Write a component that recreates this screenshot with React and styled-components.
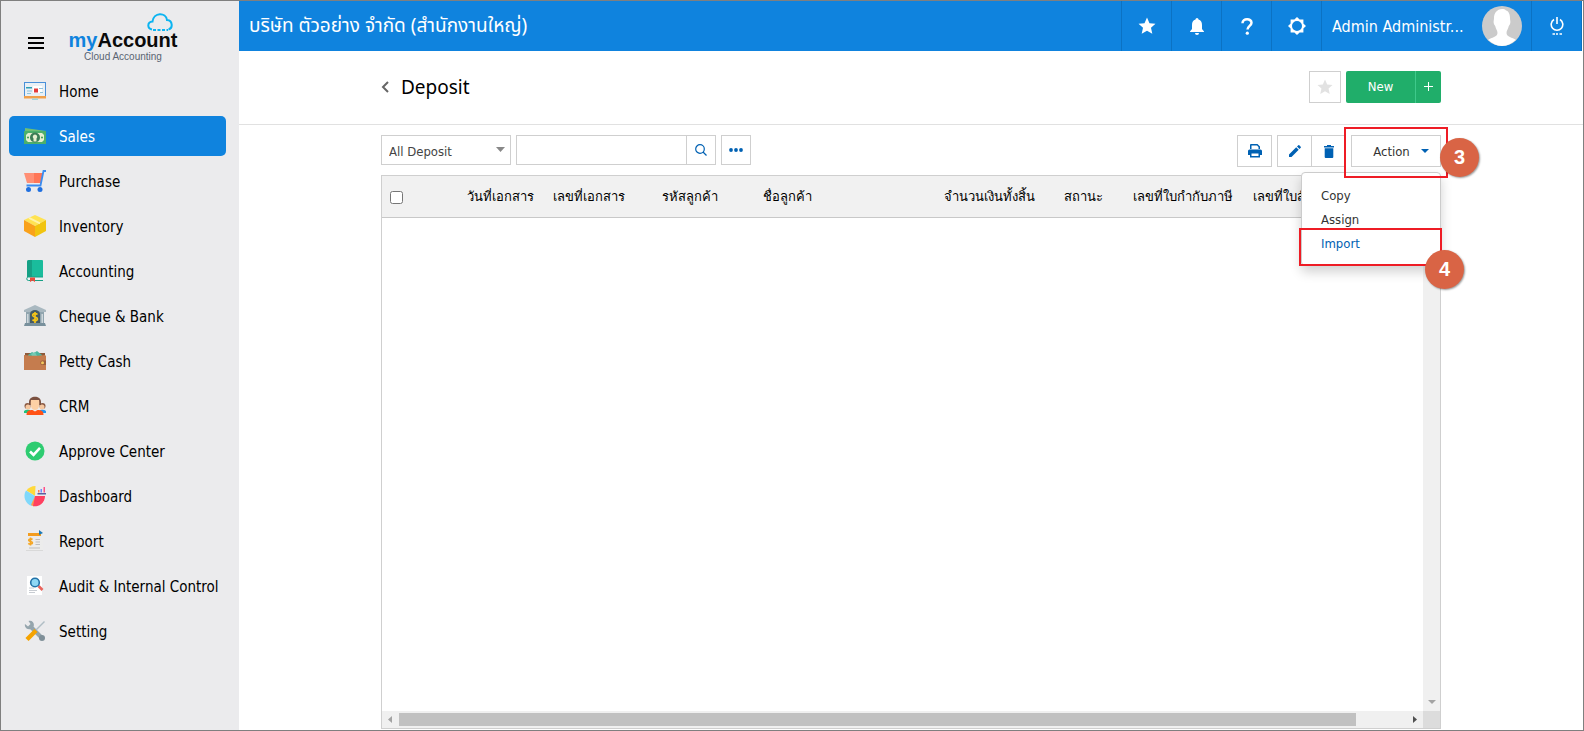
import React from 'react';
import styled, { createGlobalStyle } from 'styled-components';

const BLUE = '#0f83de';
const INK = '#0061b3';
const LINE = '#cfcfcf';
const UI = '"DejaVu Sans Condensed", "DejaVu Sans", "Noto Sans", sans-serif';

const GlobalStyle = createGlobalStyle`
  *, *::before, *::after { box-sizing: border-box; }
  body { margin: 0; font-family: ${UI}; color: #000; background: #fff; }
  button, input, select { font: inherit; color: inherit; }
  button { cursor: pointer; }
`;

const Page = styled.div`
  display: flex;
  height: 100vh;
  border: 1px solid #7f7f7f;
`;

/* ---------- sidebar ---------- */
const Sidebar = styled.aside`
  flex: 0 0 238px;
  background: #ebebed;
  padding: 0 13px 0 8px;
`;
const Brand = styled.header`
  display: flex;
  height: 70px;
  padding: 12px 0 0 18px;
`;
const Burger = styled.button`
  width: 18px;
  height: 14px;
  margin: 23px 22px 0 0;
  padding: 0;
  border: 0;
  background: none;
  svg { display: block; }
`;
const Logo = styled.div`
  position: relative;
  width: 112px;
  padding-top: 16px;
  text-align: center;
  font-family: "Liberation Sans", Arial, sans-serif;
`;
const LogoCloud = styled.svg`
  position: absolute;
  top: 0;
  right: 6px;
`;
const LogoName = styled.div`
  font-size: 20px;
  line-height: 22px;
  font-weight: 700;
  color: #0a0a0a;
  span { color: ${BLUE}; }
`;
const LogoTag = styled.div`
  font-size: 10px;
  line-height: 12px;
  color: #5a6472;
`;
const NavList = styled.ul`
  display: flex;
  flex-direction: column;
  gap: 5px;
  margin: 0;
  padding: 0;
  list-style: none;
`;
const NavLink = styled.a`
  display: flex;
  align-items: center;
  gap: 13px;
  height: 40px;
  padding-left: 15px;
  border-radius: 5px;
  font-size: 15px;
  white-space: nowrap;
  text-decoration: none;
  color: ${p => (p.$active ? '#fff' : '#000')};
  background: ${p => (p.$active ? BLUE : 'transparent')};
  svg { flex: none; }
`;
const NavLabel = styled.span`
  padding-top: 2px;
`;

/* ---------- top bar ---------- */
const Main = styled.main`
  flex: 1;
  min-width: 0;
  display: flex;
  flex-direction: column;
`;
const TopBar = styled.header`
  display: flex;
  height: 50px;
  flex: none;
  margin-right: 1px;
  border-right: 1px solid #0b72c3;
  background: ${BLUE};
  color: #fff;
`;
const Company = styled.div`
  flex: 1;
  padding: 2px 0 0 10px;
  font-family: "Noto Sans Thai", "Noto Sans", sans-serif;
  font-size: 19px;
  line-height: 48px;
  white-space: nowrap;
`;
const TopButton = styled.button`
  display: flex;
  align-items: center;
  justify-content: center;
  width: 50px;
  padding: 0;
  border: 0;
  border-left: 1px solid #0b72c3;
  background: none;
`;
const Account = styled.button`
  display: flex;
  align-items: center;
  justify-content: space-between;
  width: 210px;
  padding: 0 9px 0 10px;
  border: 0;
  border-left: 1px solid #0b72c3;
  background: none;
  font-size: 16px;
  white-space: nowrap;
`;

/* ---------- content ---------- */
const TitleStrip = styled.div`
  flex: none;
  border-bottom: 1px solid #e1e1e1;
`;
const Column = styled.div`
  width: 100%;
  max-width: 1060px;
  margin: 0 auto;
`;
const TitleRow = styled(Column)`
  display: flex;
  align-items: center;
  justify-content: space-between;
  height: 73px;
  padding-bottom: 2px;
`;
const Title = styled.h1`
  display: flex;
  align-items: center;
  gap: 12px;
  margin: 0;
  font-family: "Noto Sans", sans-serif;
  font-size: 19px;
  font-weight: 400;
`;
const BackLink = styled.a`
  display: flex;
`;
const Group = styled.div`
  display: flex;
  gap: ${p => p.$gap || 0}px;
`;
const BoxButton = styled.button`
  display: flex;
  align-items: center;
  justify-content: center;
  width: ${p => p.$w}px;
  height: ${p => p.$h}px;
  padding: 0;
  border: 1px solid ${LINE};
  border-left-width: ${p => (p.$joined ? 0 : 1)}px;
  background: #fff;
  color: ${INK};
`;
const NewButton = styled.button`
  display: flex;
  align-items: center;
  justify-content: center;
  width: ${p => p.$w}px;
  height: 32px;
  padding: 0;
  border: 0;
  border-left: ${p => (p.$split ? '1px solid #3fc98b' : '0')};
  border-radius: ${p => (p.$split ? '0 2px 2px 0' : '2px 0 0 2px')};
  background: #20ae6a;
  color: #fff;
  font-size: 13px;
`;
const Work = styled(Column)`
  flex: 1;
  min-height: 0;
  display: flex;
  flex-direction: column;
  padding: 10px 0 1px;
`;
const ToolRow = styled.div`
  display: flex;
  justify-content: space-between;
  height: 40px;
`;
const SelectWrap = styled.div`
  position: relative;
  width: 130px;
  height: 30px;
  svg { position: absolute; right: 6px; top: 12px; pointer-events: none; }
`;
const Select = styled.select`
  width: 100%;
  height: 100%;
  padding: 2px 7px 0;
  appearance: none;
  border: 1px solid ${LINE};
  border-radius: 0;
  background: #fff;
  color: #444;
  font-size: 13px;
`;
const SearchInput = styled.input`
  width: 171px;
  height: 30px;
  padding: 0 8px;
  border: 1px solid ${LINE};
  border-radius: 0;
  font-size: 13px;
`;
const ActionWrap = styled.div`
  position: relative;
  z-index: 1;
`;
const ActionButton = styled(BoxButton)`
  gap: 11px;
  padding-left: 10px;
  color: #333;
  font-size: 13px;
`;
const Menu = styled.ul`
  position: absolute;
  top: 37px;
  right: 0;
  width: 140px;
  margin: 0;
  padding: 10px 0;
  list-style: none;
  border: 1px solid #ccc;
  border-radius: 4px;
  background: #fff;
  box-shadow: 0 6px 12px rgba(0, 0, 0, 0.18);
`;
const MenuItem = styled.button`
  display: block;
  width: 100%;
  height: 24px;
  padding: 0 0 0 19px;
  border: 0;
  background: none;
  text-align: left;
  font-size: 13px;
  color: ${p => (p.$on ? INK : '#333')};
`;
const Outline = styled.div`
  position: absolute;
  top: ${p => p.$top}px;
  right: ${p => p.$right}px;
  width: ${p => p.$w}px;
  height: ${p => p.$h}px;
  border: 2px solid #ee1c25;
  pointer-events: none;
`;
const Step = styled.div`
  position: absolute;
  top: ${p => p.$top}px;
  right: ${p => p.$right}px;
  width: 39px;
  height: 39px;
  border-radius: 50%;
  background: #d96445;
  color: #fff;
  box-shadow: 1px 1px 2px rgba(0, 0, 0, 0.4);
  font: 700 20px/38px "Liberation Sans", Arial, sans-serif;
  text-align: center;
`;

/* ---------- grid ---------- */
const GridFrame = styled.section`
  flex: 1;
  min-height: 0;
  display: flex;
  flex-direction: column;
  border: 1px solid ${LINE};
`;
const HeadClip = styled.div`
  flex: none;
  overflow: hidden;
  background: #f1f1f1;
  border-bottom: 1px solid #c8c8c8;
`;
const Table = styled.table`
  width: 100%;
  table-layout: fixed;
  border-collapse: collapse;
  th {
    height: 41px;
    padding: 0;
    overflow: hidden;
    text-align: left;
    font-weight: 400;
    font-size: 13px;
    line-height: 20px;
    white-space: nowrap;
  }
`;
const Col = styled.col`
  width: ${p => (p.$w ? p.$w + 'px' : 'auto')};
`;
const Check = styled.input`
  display: block;
  width: 13px;
  height: 13px;
  margin: 2px 0 0 8px;
`;
const GridBody = styled.div`
  flex: 1;
  min-height: 0;
  display: grid;
  grid-template-columns: 1fr 17px;
  grid-template-rows: 1fr 17px;
`;
const VTrack = styled.div`
  display: flex;
  align-items: flex-end;
  justify-content: center;
  padding-bottom: 7px;
  background: #f0f0f0;
`;
const HTrack = styled.div`
  display: flex;
  align-items: center;
  justify-content: space-between;
  padding: 0 6px;
  background: #f0f0f0;
`;
const Thumb = styled.div`
  flex: 1;
  height: 13px;
  margin: 0 57px 0 7px;
  background: #c1c1c1;
`;
const Corner = styled.div`
  background: #dcdcdc;
`;

/* ---------- drawings ---------- */
const Star = ({ size, fill }) => (
  <svg width={size} height={size} viewBox="0 0 24 24" fill={fill} aria-hidden="true">
    <path d="M12 .8l3.300 7.400 8 .8-6 5.400 1.800 8L12 18.300 4.900 22.400l1.800-8L.7 9l8-.8z" />
  </svg>
);
const Avatar = () => (
  <svg width="40" height="40" viewBox="0 0 40 40" aria-hidden="true">
    <circle cx="20" cy="20" r="20" fill="#cbcbcb" />
    <path fill="#fff" d="M20 3c-5 .3-8 4-8 9 0 2-.6 3-.3 5 .4 2 1.200 2 1.500 3 .6 3 2.300 4.500 2.300 7 0 4-6 4.500-9.300 6.800A20 20 0 0 0 20 40a20 20 0 0 0 13.800-6.200C30.500 31.500 24.500 31 24.500 27c0-2.500 1.700-4 2.300-7 .3-1 1.100-1 1.500-3 .3-2-.3-3-.3-5 0-4-1.500-7-4-7.500C23 3 22 3 20 3z" />
  </svg>
);
const Triangle = ({ w, h, fill, dir = 'down' }) => {
  const d = dir === 'down' ? `M0 0h${w}L${w / 2} ${h}z` : dir === 'left' ? `M${w} 0v${h}L0 ${h / 2}z` : `M0 0v${h}L${w} ${h / 2}z`;
  return <svg width={w} height={h} fill={fill} aria-hidden="true"><path d={d} /></svg>;
};

const art = {
  Home: <>
    <rect x="0" y="2" width="22" height="15" fill="#4a90d9" /><rect x="1" y="3" width="20" height="13.500" fill="#e9f0f5" />
    <path fill="#f0a04b" d="M0 16h22v2.500H0z" /><path fill="#9fd4de" d="M8 18.500h6V20H8z" />
    <path fill="#2e9fb5" d="M2 7h6v1.500H2z" /><path fill="#fff" d="M9 6h9v7H9z" /><path fill="#e23b3b" d="M10 8.500h4v4h-4z" />
    <path stroke="#8fc3dd" d="M3 11h5M3 13.500h4M15 8.500h4M16 12.500h3" /></>,
  Sales: <>
    <path fill="#6fbf73" d="M1 3l21 3v5L1 8z" /><path fill="#4caf6a" d="M0 6h22v13H0z" />
    <path fill="#e4efcf" d="M4 8h14l2 2v5l-2 2H4l-2-2v-5z" /><circle cx="11" cy="12.500" r="5" fill="#3b7d55" />
    <path fill="#e4efcf" d="M11 9.500a2.300 2.300 0 0 1 1.500 4v3h-3v-3a2.300 2.300 0 0 1 1.500-4z" /><circle cx="4" cy="12.500" r="1" fill="#3d9b4f" /><circle cx="18" cy="12.500" r="1" fill="#3d9b4f" /></>,
  Purchase: <>
    <path fill="#ff8f75" d="M0 3h19l-2 10H3z" /><path fill="#ff7657" d="M10 3h9l-2 10h-7z" />
    <path fill="none" stroke="#3a8cf0" strokeWidth="1.800" d="M22 1h-2.500l-3 14.500H2.500" />
    <circle cx="4.500" cy="19.500" r="2.500" fill="#1f6fe0" /><circle cx="16" cy="19.500" r="2.500" fill="#1f6fe0" /></>,
  Inventory: <>
    <path fill="#ffe352" d="M11 0l11 5-11 6L0 5z" /><path fill="#f9a11b" d="M0 5l11 6v11L0 16z" /><path fill="#f1c40f" d="M22 5l-11 6v11l11-6z" />
    <path stroke="#fff3a8" strokeWidth="2" d="M5 2.800l11 5.500" /></>,
  Accounting: <>
    <path fill="#1abc9c" d="M5 0h13a1 1 0 0 1 1 1v16H3V2a2 2 0 0 1 2-2z" /><path fill="#16a085" d="M5 0h3v17H3V2a2 2 0 0 1 2-2z" />
    <path fill="#ecf0f1" d="M4 17h15v3H4z" /><path fill="none" stroke="#16a085" d="M19 17H4.500a1.500 1.500 0 0 0 0 3.500H19" />
    <path fill="#e74c3c" d="M6 17.500h5V22l-2.500-1.500L6 22z" /></>,
  'Cheque & Bank': <>
    <path fill="#a9b8c0" d="M11 0l11 5v2H0V5z" /><path fill="#90a4ae" d="M2 7h18v2H2zM2 9h4v9H2zM16 9h4v9h-4z" /><path fill="#cfd8dc" d="M3 9h1.500v9H3zM17.500 9H19v9h-1.500z" />
    <path fill="#455a64" d="M6 18V9a5 4 0 0 1 10 0v9z" /><path fill="#78909c" d="M1 18h20l1 3H0z" />
    <path fill="none" stroke="#f5c518" strokeWidth="1.700" d="M13.500 9.500C12 8 8.500 8.300 8.700 10.500c.2 2 4.600 1.200 4.700 3.400.1 2.200-3.500 2.300-4.900.8M11 7v11" /></>,
  'Petty Cash': <>
    <path fill="#8d5a3b" d="M1 3h20v5H1z" /><path fill="#4db6a0" d="M4 5l4-3 2 1 3-2 5 4v2H4z" /><path fill="#74cbb5" d="M7 4l4-2 2 4H8z" />
    <path fill="#c57c4e" d="M0 5c6 1 16 1 21 0l1 1v14H0z" /><path fill="#9b5f3b" d="M18.500 10.500H22V15h-3.500a2.200 2.200 0 0 1 0-4.500z" /><circle cx="18.500" cy="12.800" r="1.500" fill="#f4c95d" /></>,
  CRM: <>
    <circle cx="3.500" cy="11" r="3" fill="#8a5b45" /><circle cx="18.500" cy="11" r="3" fill="#8a5b45" /><circle cx="4" cy="12" r="2.500" fill="#f7c8a0" /><circle cx="18" cy="12" r="2.500" fill="#f7c8a0" />
    <path fill="#20c27d" d="M0 16q2-2 6-1v3H0z" /><path fill="#2196f3" d="M22 16q-2-2-6-1v3h6z" />
    <path fill="#7b5140" d="M5 7C5 0 17 0 17 7v3H5z" /><path fill="#fcd0a5" d="M7 5h8c1 7-1 10-4 10S6 12 7 5z" />
    <path fill="#ff5216" d="M2.500 20c0-4 2-5 6-5l2.500 1.500 2.500-1.500c4 0 6 1 6 5z" /></>,
  'Approve Center': <>
    <circle cx="11" cy="11" r="9.500" fill="#2ecc71" /><path fill="none" stroke="#fff" strokeWidth="2.600" d="M6 11.500l3.500 3.300 6.500-7" /></>,
  Dashboard: <>
    <path fill="#ffd93b" d="M11 11L2.500 5.500A11 11 0 0 1 11.500 1z" /><path fill="#7fd8fb" d="M11 11L8 21A10.500 10.500 0 0 1 2 5.500z" /><path fill="#ff9a4a" d="M11 11l-1 10.500L7 20z" />
    <path fill="#ff4060" d="M11 11h10a10 10 0 0 1-12 10z" /><path fill="#5a60a0" d="M13.500 8h8.500v1.500h-8.500z" /><path fill="#ff7f50" d="M14 5h1.500v2.500H14z" /><path fill="#6c8cff" d="M16.500 4H18v3.500h-1.500z" /><path fill="#ff4f87" d="M19.500 2H21v5.500h-1.500z" /></>,
  Report: <>
    <path fill="#d9d9d9" d="M2 1h17v20H2z" /><path fill="#ececec" d="M2 1h17v19H2z" /><path fill="#f39c1f" d="M4 3h13v3H4z" /><path fill="#1f7ab8" d="M15 0l4 3-4 2z" />
    <path fill="none" stroke="#f5a623" strokeWidth="1.600" d="M8.500 9.500c-1-1-4-.8-3.800.8.2 1.400 3.700.9 3.800 2.500 0 1.600-3 1.600-4.200.5M6.500 7.500v8" />
    <path stroke="#bdbdbd" d="M11.500 9.500H16M11.500 12H16M11.500 14.500H16M5 18h11" /></>,
  'Audit & Internal Control': <>
    <path fill="#fff" d="M3 1h15v19H3z" /><path stroke="#c8ccd2" d="M5 13h5M5 15.500h8M5 17.500h6" />
    <path stroke="#e9635c" strokeWidth="2.600" d="M14.500 11l4 4" /><circle cx="11" cy="7.500" r="4.300" fill="#8fd7f5" stroke="#2472a8" strokeWidth="1.600" /></>,
  Setting: <>
    <path stroke="#95a5ad" strokeWidth="4" d="M6 6l12 12" /><path fill="#95a5ad" d="M1 4l3 2.500L6.500 4 4.500 1C8-.5 11 3 9.500 6.500L7 9C3.500 10 0 7.500 1 4z" /><circle cx="18" cy="18" r="3" fill="#7f8f98" />
    <path stroke="#b0bec5" strokeWidth="1.400" d="M20.500 1.500L12 10" /><path stroke="#f5a300" strokeWidth="4.500" d="M12 10.500L3 19.500" /></>,
};

const columns = [
  ['วันที่เอกสาร', 86], ['เลขที่เอกสาร', 109], ['รหัสลูกค้า', 101], ['ชื่อลูกค้า', 181],
  ['จำนวนเงินทั้งสิ้น', 120], ['สถานะ', 69], ['เลขที่ใบกำกับภาษี', 120], ['เลขที่ใบสั่', 0],
];

export default function App() {
  return (
    <Page>
      <GlobalStyle />
      <Sidebar>
        <Brand>
          <Burger aria-label="Toggle menu">
            <svg width="18" height="14"><path stroke="#000" strokeWidth="2" d="M1 2h16M1 7h16M1 12h16" /></svg>
          </Burger>
          <Logo>
            <LogoCloud width="26" height="19" viewBox="0 0 26 19" fill="none" stroke="#0cb4f1" strokeWidth="2">
              <path d="M5 16.500C0 15.500 0 9 5.500 8.500 6.500-1 19-1 20 7c6 .5 6 8.500 1.500 9.500" />
              <path strokeDasharray="3 1.500" d="M6 17h15" />
            </LogoCloud>
            <LogoName><span>my</span>Account</LogoName>
            <LogoTag>Cloud Accounting</LogoTag>
          </Logo>
        </Brand>
        <nav>
          <NavList>
            {Object.keys(art).map(name => (
              <li key={name}>
                <NavLink href="#" $active={name === 'Sales'}>
                  <svg width="22" height="22" viewBox="0 0 22 22" aria-hidden="true">{art[name]}</svg>
                  <NavLabel>{name}</NavLabel>
                </NavLink>
              </li>
            ))}
          </NavList>
        </nav>
      </Sidebar>

      <Main>
        <TopBar>
          <Company>บริษัท ตัวอย่าง จำกัด (สำนักงานใหญ่)</Company>
          <TopButton aria-label="Favourites"><Star size={18} fill="#fff" /></TopButton>
          <TopButton aria-label="Notifications">
            <svg width="14" height="17" viewBox="0 0 14 17" fill="#fff"><path d="M7 0a1.500 1.500 0 0 1 1.500 1.500C11 2.200 12 4.300 12 7v4l2 2.500V14H0v-.5L2 11V7c0-2.700 1-4.800 3.500-5.500A1.500 1.500 0 0 1 7 0zM5 15h4a2 2 0 0 1-4 0z" /></svg>
          </TopButton>
          <TopButton aria-label="Help">
            <svg width="12" height="17" viewBox="0 0 12 17"><path fill="none" stroke="#fff" strokeWidth="2.500" d="M1.500 5.200C1.500 0 10.500 0 10.500 4.800c0 3-4 3.200-4 6.800" /><circle cx="6.300" cy="15.200" r="1.600" fill="#fff" /></svg>
          </TopButton>
          <TopButton aria-label="Settings">
            <svg width="18" height="18" viewBox="0 0 18 18" fill="#fff" fillRule="evenodd"><path d="M9 0l2.600 2.600h3.800v3.800L18 9l-2.600 2.600v3.800h-3.800L9 18l-2.600-2.600H2.600v-3.800L0 9l2.600-2.600V2.600h3.800zM9 4a5 5 0 1 0 0 10A5 5 0 0 0 9 4z" /></svg>
          </TopButton>
          <Account>
            Admin Administr...
            <Avatar />
          </Account>
          <TopButton aria-label="Log out">
            <svg width="14" height="18" viewBox="0 0 14 18" fill="none" stroke="#fff" strokeWidth="1.600"><path d="M4 2.500a5.800 5.800 0 1 0 6 0M7 0v7M2.500 17H5M6 17h2M9.500 17H12" /></svg>
          </TopButton>
        </TopBar>

        <TitleStrip>
          <TitleRow>
            <Title>
              <BackLink href="#" aria-label="Back">
                <svg width="8" height="12" fill="none" stroke="#666" strokeWidth="2"><path d="M7 1L2 6l5 5" /></svg>
              </BackLink>
              Deposit
            </Title>
            <Group $gap={5}>
              <BoxButton $w={32} $h={32} aria-label="Add to favourites"><Star size={16} fill="#e2e2e2" /></BoxButton>
              <Group>
                <NewButton $w={69}>New</NewButton>
                <NewButton $w={26} $split aria-label="New from template">
                  <svg width="9" height="9" stroke="#fff"><path d="M0 4.500h9M4.500 0v9" /></svg>
                </NewButton>
              </Group>
            </Group>
          </TitleRow>
        </TitleStrip>

        <Work>
          <ToolRow>
            <Group $gap={5}>
              <SelectWrap>
                <Select aria-label="View" defaultValue="all"><option value="all">All Deposit</option></Select>
                <Triangle w={9} h={5} fill="#888" />
              </SelectWrap>
              <Group>
                <SearchInput type="text" aria-label="Search" />
                <BoxButton $w={29} $h={30} $joined aria-label="Search">
                  <svg width="12" height="12" fill="none" stroke={INK} strokeWidth="1.200"><circle cx="5" cy="5" r="4.300" /><path d="M8 8l3.500 3.500" /></svg>
                </BoxButton>
              </Group>
              <BoxButton $w={30} $h={30} aria-label="More filters">
                <svg width="14" height="4" fill={INK}><circle cx="2" cy="2" r="1.900" /><circle cx="7" cy="2" r="1.900" /><circle cx="12" cy="2" r="1.900" /></svg>
              </BoxButton>
            </Group>
            <Group $gap={5}>
              <BoxButton $w={35} $h={32} aria-label="Print">
                <svg width="14" height="14" viewBox="0 0 14 14" fill={INK} fillRule="evenodd"><path d="M3 0h6.500L12 2.500V5H2V1a1 1 0 0 1 1-1zm.5 1.500V5h7V3L9 1.500zM1.500 5.500h11A1.500 1.500 0 0 1 14 7v4h-2v2.500H2V11H0V7a1.500 1.500 0 0 1 1.500-1.500zM3.500 9.500V12h7V9.500z" /></svg>
              </BoxButton>
              <Group>
                <BoxButton $w={35} $h={32} aria-label="Edit">
                  <svg width="12" height="12" fill={INK}><path d="M0 9.500L7.200 2.300l2.500 2.500L2.500 12H0zM8 1.500L9.300.3q.5-.5 1 0l1.400 1.400q.5.500 0 1L10.500 4z" /></svg>
                </BoxButton>
                <BoxButton $w={34} $h={32} $joined aria-label="Delete">
                  <svg width="10" height="13" fill={INK}><path d="M0 1h3V0h4v1h3v1.500H0zM.7 3.300h8.600V12q0 1-1 1H1.700q-1 0-1-1z" /></svg>
                </BoxButton>
              </Group>
              <ActionWrap>
                <ActionButton $w={90} $h={32} aria-haspopup="true" aria-expanded="true">
                  Action <Triangle w={8} h={4} fill={INK} />
                </ActionButton>
                <Menu>
                  <li><MenuItem>Copy</MenuItem></li>
                  <li><MenuItem>Assign</MenuItem></li>
                  <li><MenuItem $on>Import</MenuItem></li>
                </Menu>
                <Outline $top={-8} $right={-7} $w={104} $h={51} />
                <Outline $top={93} $right={-1} $w={143} $h={38} />
                <Step $top={3} $right={-38}>3</Step>
                <Step $top={115} $right={-23}>4</Step>
              </ActionWrap>
            </Group>
          </ToolRow>

          <GridFrame>
            <HeadClip>
              <Table>
                <colgroup><Col $w={85} />{columns.map(([n, w]) => <Col key={n} $w={w} />)}</colgroup>
                <thead>
                  <tr>
                    <th><Check type="checkbox" aria-label="Select all" /></th>
                    {columns.map(([n]) => <th key={n}>{n}</th>)}
                  </tr>
                </thead>
              </Table>
            </HeadClip>
            <GridBody>
              <div />
              <VTrack><Triangle w={8} h={4} fill="#a3a3a3" /></VTrack>
              <HTrack>
                <Triangle w={4} h={7} dir="left" fill="#a3a3a3" />
                <Thumb />
                <Triangle w={4} h={7} dir="right" fill="#505050" />
              </HTrack>
              <Corner />
            </GridBody>
          </GridFrame>
        </Work>
      </Main>
    </Page>
  );
}
